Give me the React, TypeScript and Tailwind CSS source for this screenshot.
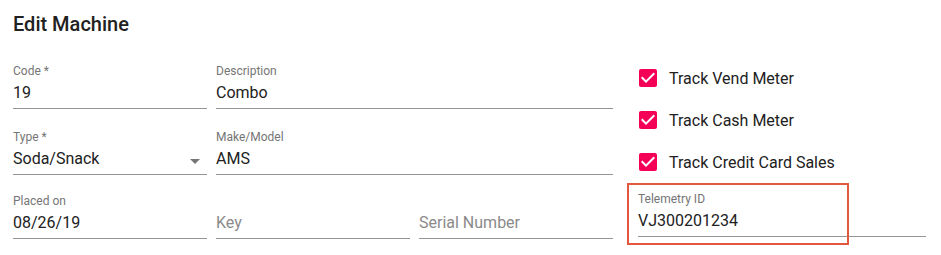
import React from "react";

type FieldProps = {
  label?: string;
  value?: string;
  placeholder?: string;
  select?: boolean;
  className?: string;
};

function Field({ label, value, placeholder, select, className = "" }: FieldProps) {
  return (
    <div className={`relative border-b border-[#949494] pb-[6px] ${className}`}>
      <div className="h-[16px] text-[12px] leading-[16px] text-[#757575]">{label}</div>
      <div className="mt-[4px] h-[19px] text-[16px] leading-[19px]">
        {value ? (
          <span className="text-[#212121]">{value}</span>
        ) : (
          <span className="text-[#8a8a8a]">{placeholder}</span>
        )}
      </div>
      {select && (
        <svg viewBox="0 0 24 24" className="absolute right-0 top-[20px] h-[24px] w-[24px]" fill="rgba(0,0,0,0.54)">
          <path d="M7 10l5 5 5-5z" />
        </svg>
      )}
    </div>
  );
}

function CheckRow({ text }: { text: string }) {
  return (
    <div className="flex h-[42px] items-center">
      <svg viewBox="0 0 24 24" className="ml-[-2px] h-[24px] w-[24px]" fill="#f50057">
        <path d="M19 3H5c-1.11 0-2 .9-2 2v14c0 1.1.89 2 2 2h14c1.11 0 2-.9 2-2V5c0-1.1-.89-2-2-2zm-9 14l-5-5 1.41-1.41L10 14.17l7.59-7.59L19 8l-9 9z" />
      </svg>
      <span className="ml-[9px] text-[16px] leading-[19px] text-[#212121]">{text}</span>
    </div>
  );
}

export default function App() {
  return (
    <div
      className="relative h-[255px] w-[941px] overflow-hidden bg-white"
      style={{ fontFamily: "Roboto, 'Liberation Sans', sans-serif" }}
    >
      <h1 className="pl-[13px] pt-[12px] text-[20px] font-medium leading-[24px] text-[#212121]">Edit Machine</h1>

      <div className="mt-[21px] flex items-start">
        <div className="ml-[13px] mt-[6px] grid w-[600px] grid-cols-3 gap-x-[9px]">
          <Field label="Code *" value="19" />
          <Field label="Description" value="Combo" className="col-span-2" />

          <Field label="Type *" value="Soda/Snack" select className="mt-[20px]" />
          <Field label="Make/Model" value="AMS" className="col-span-2 mt-[20px]" />

          <Field label="Placed on" value="08/26/19" className="mt-[18px]" />
          <Field placeholder="Key" className="mt-[18px]" />
          <Field placeholder="Serial Number" className="mt-[18px]" />
        </div>

        <div className="ml-[25px] w-[288px]">
          <CheckRow text="Track Vend Meter" />
          <CheckRow text="Track Cash Meter" />
          <CheckRow text="Track Credit Card Sales" />
          <Field label="Telemetry ID" value="VJ300201234" className="mt-[8px]" />
        </div>
      </div>

      <div className="pointer-events-none absolute left-[627px] top-[183px] h-[62px] w-[222px] border-2 border-[#e4573f]" />
    </div>
  );
}
